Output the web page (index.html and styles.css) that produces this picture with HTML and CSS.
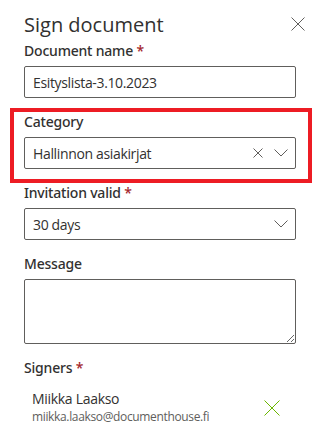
FILE: index.html
```html
<!DOCTYPE html>
<html lang="en">
<head>
    <meta charset="UTF-8">
    <meta name="viewport" content="width=device-width, initial-scale=1.0">
    <title>Sign document</title>
    <link rel="stylesheet" href="styles.css">
</head>
<body>
    <div class="panel">
        <div class="header">
            <div class="title">Sign document</div>
            <div class="close">
                <svg width="16" height="16" viewBox="0 0 16 16">
                    <path d="M1.5 1.5 L14.5 14.5 M14.5 1.5 L1.5 14.5" stroke="#605e5c" stroke-width="1" fill="none"/>
                </svg>
            </div>
        </div>

        <div class="field">
            <div class="label">Document name <span class="req">*</span></div>
            <div class="box">
                <span class="value">Esityslista-3.10.2023</span>
            </div>
        </div>

        <div class="field marked">
            <div class="label">Category</div>
            <div class="box">
                <span class="value">Hallinnon asiakirjat</span>
                <svg class="clear" width="12" height="12" viewBox="0 0 12 12">
                    <path d="M1.5 1.5 L10.5 10.5 M10.5 1.5 L1.5 10.5" stroke="#605e5c" stroke-width="1" fill="none"/>
                </svg>
                <svg class="chev" width="14" height="8" viewBox="0 0 14 8">
                    <path d="M0.5 0.5 L7 7 L13.5 0.5" stroke="#605e5c" stroke-width="1" fill="none"/>
                </svg>
            </div>
        </div>

        <div class="field">
            <div class="label">Invitation valid <span class="req">*</span></div>
            <div class="box">
                <span class="value">30 days</span>
                <svg class="chev" width="14" height="8" viewBox="0 0 14 8">
                    <path d="M0.5 0.5 L7 7 L13.5 0.5" stroke="#605e5c" stroke-width="1" fill="none"/>
                </svg>
            </div>
        </div>

        <div class="field">
            <div class="label">Message</div>
            <textarea class="area"></textarea>
        </div>

        <div class="field">
            <div class="label">Signers <span class="req">*</span></div>
            <div class="signer">
                <div class="who">
                    <div class="name">Miikka Laakso</div>
                    <div class="mail">miikka.laakso@documenthouse.fi</div>
                </div>
                <svg class="remove" width="16" height="16" viewBox="0 0 16 16">
                    <path d="M0.5 0.5 L15.5 15.5 M15.5 0.5 L0.5 15.5" stroke="#6bb700" stroke-width="1" fill="none"/>
                </svg>
            </div>
        </div>
    </div>
</body>
</html>
```

FILE: styles.css
```css
body {
    margin: 0;
    background: #fff;
    font-family: "Open Sans", "Noto Sans", sans-serif;
    color: #323130;
}
.panel {
    padding: 14px 23px 0 24px;
}
.header {
    display: flex;
    justify-content: space-between;
    align-items: flex-start;
}
.title {
    font-size: 20px;
    line-height: 22px;
    color: #323130;
}
.close {
    width: 16px;
    height: 16px;
    margin: 2px -10px 0 0;
}
.close svg {
    display: block;
}
.field {
    margin-bottom: 9px;
}
.label {
    font-family: "Noto Sans", "Open Sans", sans-serif;
    font-size: 14px;
    font-weight: 500;
    line-height: 20px;
    padding: 5px 0;
    color: #323130;
    letter-spacing: -0.2px;
}
.req {
    color: #a4262c;
}
.box {
    display: flex;
    align-items: center;
    height: 32px;
    box-sizing: border-box;
    border: 1px solid #605e5c;
    border-radius: 2px;
    padding: 0 8px;
}
.value {
    flex: 1;
    font-size: 14px;
    color: #323130;
    letter-spacing: -0.35px;
}
.clear {
    margin-right: 10px;
}
.chev {
    margin-right: -1px;
}
.marked {
    position: relative;
}
.marked::after {
    content: "";
    position: absolute;
    top: 1px;
    left: -14px;
    right: -16px;
    bottom: -14px;
    border: 4px solid #ed1c24;
}
.area {
    display: block;
    width: 100%;
    height: 65px;
    box-sizing: border-box;
    border: 1px solid #605e5c;
    border-radius: 2px;
    margin: 0;
    resize: vertical;
    font-family: inherit;
}
.signer {
    display: flex;
    align-items: center;
    margin-top: 6px;
    padding-left: 8px;
}
.who {
    flex: 1;
}
.name {
    font-size: 14px;
    line-height: 20px;
    color: #323130;
    letter-spacing: -0.3px;
}
.mail {
    font-size: 12px;
    line-height: 16px;
    color: #605e5c;
    letter-spacing: -0.35px;
}
.remove {
    margin: 1px 16px 0 0;
}
```
